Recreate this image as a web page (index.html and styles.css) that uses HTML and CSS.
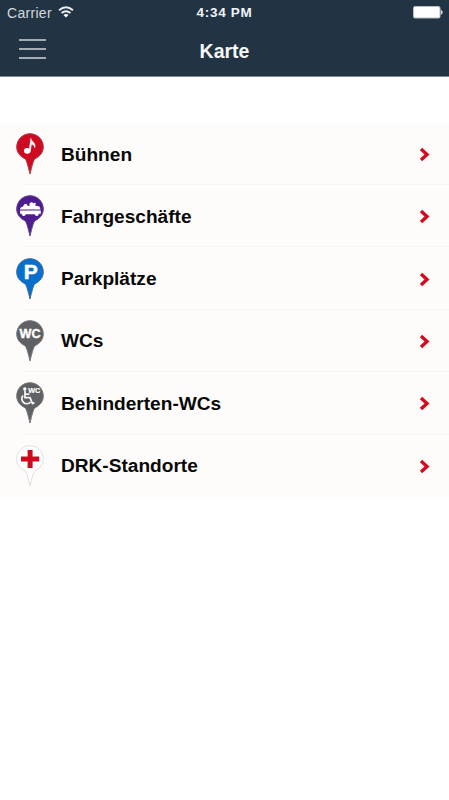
FILE: index.html
```html
<!DOCTYPE html>
<html lang="de">
  <head>
    <meta charset="utf-8">
    <title>Karte</title>
    <link rel="stylesheet" href="styles.css">
  </head>
  <body>
    <svg width="0" height="0" class="defs">
      <defs>
        <path id="pin" d="M14 .7C6.600.7.700 6.600.700 14C.7 19.500 4.200 23.500 9 25.800C10.800 27.500 12 33 14 41C16 33 17.200 27.500 19 25.800C23.800 23.500 27.300 19.500 27.300 14C27.300 6.600 21.400.7 14 .7Z"/>
      </defs>
    </svg>

    <header class="header">
      <div class="status">
        <div class="carrier">
          <span>Carrier</span>
          <svg class="wifi" width="16" height="12" viewBox="0 0 16 12">
            <path d="M1 4.200Q8-1.600 15 4.200M3.500 7Q8 3.300 12.500 7" fill="none" stroke="#e9edf0" stroke-width="1.900"/>
            <path d="M5.500 9Q8 6.900 10.500 9L8 11.500Z" fill="#fff"/>
          </svg>
        </div>
        <div class="time">4:34 PM</div>
        <svg class="battery" width="31" height="13" viewBox="0 0 31 13">
          <rect x=".5" y=".5" width="26.500" height="11.500" rx="1.500" fill="#fff" stroke="#b6bfc7"/>
          <path d="M28.200 4.200q2.300 2.100 0 4.200z" fill="#fff" stroke="#d5dade" stroke-width=".8"/>
        </svg>
      </div>
      <div class="navbar">
        <div class="menu">
          <span></span>
          <span></span>
          <span></span>
        </div>
        <h1 class="title">Karte</h1>
      </div>
    </header>

    <ul class="list">
      <li class="row">
        <svg class="pin" width="28" height="42" viewBox="0 0 28 42">
          <use href="#pin" class="red"/>
          <ellipse cx="11.200" cy="17.800" rx="3.300" ry="2.900" fill="#fff"/>
          <path d="M13 18L14.800 5.200C15.500 9 20.500 9.500 18.800 15C18.500 12.700 17 11.600 15.500 11.200L14.400 18.300Z" fill="#fff" stroke="#fff" stroke-width=".4"/>
        </svg>
        <span class="label">Bühnen</span>
        <svg class="arrow" width="11" height="15" viewBox="0 0 11 15"><path d="M2 2L8 7.500L2 13"/></svg>
      </li>
      <li class="row">
        <svg class="pin" width="28" height="42" viewBox="0 0 28 42">
          <use href="#pin" class="purple"/>
          <path d="M4 14.500Q4 12 7 11.500Q8 8.200 10.500 9L12 11L14 10.500Q12.500 8.800 14 7.800Q16.500 6.500 17.200 8.600Q18.500 7 20 8.200L19 10.500L23.500 11.500L24.500 14.500Z" fill="#fff"/>
          <path d="M4 15.500H24.800V18.700H22.800A2 2 0 0 1 18.800 19.200H9.700A2 2 0 0 1 5.700 18.700H4Z" fill="#fff"/>
        </svg>
        <span class="label">Fahrgeschäfte</span>
        <svg class="arrow" width="11" height="15" viewBox="0 0 11 15"><path d="M2 2L8 7.500L2 13"/></svg>
      </li>
      <li class="row">
        <svg class="pin" width="28" height="42" viewBox="0 0 28 42">
          <use href="#pin" class="blue"/>
          <text x="14.700" y="21" class="pin-p">P</text>
        </svg>
        <span class="label">Parkplätze</span>
        <svg class="arrow" width="11" height="15" viewBox="0 0 11 15"><path d="M2 2L8 7.500L2 13"/></svg>
      </li>
      <li class="row">
        <svg class="pin" width="28" height="42" viewBox="0 0 28 42">
          <use href="#pin" class="gray"/>
          <text x="14" y="18" class="pin-wc" textLength="21" lengthAdjust="spacingAndGlyphs">WC</text>
        </svg>
        <span class="label">WCs</span>
        <svg class="arrow" width="11" height="15" viewBox="0 0 11 15"><path d="M2 2L8 7.500L2 13"/></svg>
      </li>
      <li class="row">
        <svg class="pin" width="28" height="42" viewBox="0 0 28 42">
          <use href="#pin" class="gray"/>
          <circle cx="8.800" cy="7" r="1.700" fill="#fff"/>
          <path d="M9 8.500V15.700H14L16.500 21.500L18.500 20.700M9.500 12.200H13.500M7 13.500A4.900 4.900 0 1 0 14.500 20" fill="none" stroke="#f3f3f3" stroke-width="1.800"/>
          <text x="18.300" y="11.300" class="pin-wc small" textLength="12" lengthAdjust="spacingAndGlyphs">WC</text>
        </svg>
        <span class="label">Behinderten-WCs</span>
        <svg class="arrow" width="11" height="15" viewBox="0 0 11 15"><path d="M2 2L8 7.500L2 13"/></svg>
      </li>
      <li class="row">
        <svg class="pin" width="28" height="42" viewBox="0 0 28 42">
          <use href="#pin" class="white"/>
          <path d="M11.600 5H16.600V11.500H23.200V16.500H16.600V23H11.600V16.500H5V11.500H11.600Z" fill="#d00a1d"/>
        </svg>
        <span class="label">DRK-Standorte</span>
        <svg class="arrow" width="11" height="15" viewBox="0 0 11 15"><path d="M2 2L8 7.500L2 13"/></svg>
      </li>
    </ul>
  </body>
</html>
```

FILE: styles.css
```css
* {
  box-sizing: border-box;
}

body {
  margin: 0;
  background: #fff;
  font-family: "Liberation Sans", Arial, sans-serif;
}

.defs {
  display: block;
}

.header {
  height: 77px;
  background: #223444;
  border-bottom: 1px solid #7d8891;
  color: #fff;
}

.status {
  display: grid;
  grid-template-columns: 1fr auto 1fr;
  align-items: center;
  height: 25px;
  padding: 0 5px 0 7px;
  font-size: 14px;
}

.carrier {
  display: flex;
  gap: 6px;
  align-items: center;
  color: #d3d8dc;
  letter-spacing: 0.3px;
}

.wifi {
  margin-top: -1px;
}

.time {
  margin-right: 2px;
  font-weight: bold;
  font-size: 13.5px;
  letter-spacing: 0.7px;
  color: #f1f3f5;
}

.battery {
  justify-self: end;
}

.navbar {
  display: grid;
  grid-template-columns: 60px 1fr 60px;
  align-items: center;
  height: 51px;
}

.menu {
  display: flex;
  flex-direction: column;
  gap: 7px;
  width: 27px;
  margin: -3px 0 0 19px;
}

.menu span {
  height: 2px;
  background: #a5adb4;
}

.title {
  margin: 0;
  text-align: center;
  font-size: 19.5px;
  line-height: 24px;
  color: #f7f8f9;
}

.list {
  margin: 47px 0 0;
  padding: 0;
  list-style: none;
  background: #fefcfb;
}

.row {
  display: flex;
  align-items: center;
  height: 62.4px;
  padding: 0 19px 0 16px;
  background: linear-gradient(#faf3f2, #faf3f2) 24px 100% / 100% 1px no-repeat;
}

.row:first-child {
  height: 61px;
}

.row:last-child {
  height: 62px;
  background: none;
}

.pin {
  flex: none;
  margin-right: 17px;
}

.row:first-child .pin {
  margin-bottom: 2px;
}

.red {
  fill: #ce0a20;
  stroke: #ab3b48;
}

.purple {
  fill: #4f1b91;
  stroke: #604583;
}

.blue {
  fill: #0870cc;
  stroke: #366c9e;
}

.gray {
  fill: #606164;
  stroke: #77787a;
}

.white {
  fill: #fff;
  stroke: #dedede;
}

.pin-p {
  font-size: 21px;
  font-weight: bold;
  text-anchor: middle;
  fill: #fff;
  stroke: #fff;
  stroke-width: 0.5;
}

.pin-wc {
  font-size: 12px;
  font-weight: bold;
  text-anchor: middle;
  fill: #fff;
  stroke: #fff;
  stroke-width: 0.4;
}

.small {
  font-size: 6.5px;
  stroke-width: 0.2;
}

.label {
  flex: 1;
  padding-top: 1px;
  font-size: 19.1px;
  font-weight: bold;
  color: #090909;
}

.row:first-child .label {
  padding-top: 0;
}

.arrow {
  margin-top: 1px;
}

.row:first-child .arrow {
  margin-top: 0;
}

.arrow path {
  fill: none;
  stroke: #d20b20;
  stroke-width: 3.4;
}
```
